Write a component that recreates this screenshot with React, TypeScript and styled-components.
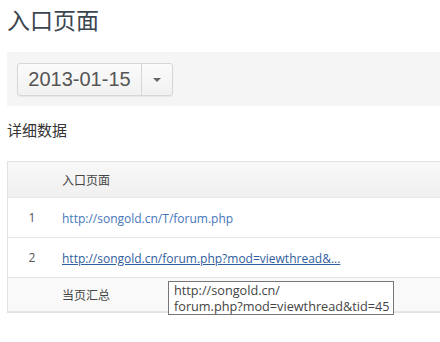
import React from "react";
import styled, { createGlobalStyle } from "styled-components";

const Global = createGlobalStyle`
  html, body { margin: 0; padding: 0; background: #fff; }
  body { font-family: "Liberation Sans", "Noto Sans CJK SC", sans-serif; color: #333; }
`;

const Page = styled.div`
  width: 440px;
  height: 342px;
  overflow: hidden;
  padding-left: 7px;
  box-sizing: border-box;
`;

const Title = styled.h1`
  margin: 0;
  padding-top: 3px;
  height: 49px;
  font-family: "Noto Sans CJK SC", sans-serif;
  font-weight: 400;
  font-size: 23px;
  line-height: 32px;
  color: #3b4650;
`;

const Band = styled.div`
  background: #f5f5f5;
  height: 54px;
  display: flex;
  align-items: center;
  padding-left: 10px;
`;

const SplitButton = styled.div`
  display: flex;
  height: 33px;
  border: 1px solid #d6d6d6;
  border-radius: 3px;
  background: linear-gradient(#fbfbfb, #f1f1f1);
  box-shadow: 0 1px 1px rgba(0,0,0,0.06);
  box-sizing: border-box;
`;

const DatePart = styled.div`
  width: 123px;
  display: flex;
  align-items: center;
  justify-content: center;
  font-family: "Liberation Sans", sans-serif;
  font-size: 20px;
  color: #555;
  border-right: 1px solid #d6d6d6;
`;

const CaretPart = styled.div`
  width: 30px;
  display: flex;
  align-items: center;
  justify-content: center;
`;

const Caret = styled.span`
  width: 0;
  height: 0;
  border-left: 4px solid transparent;
  border-right: 4px solid transparent;
  border-top: 4px solid #666;
  margin-top: 1px;
`;

const Section = styled.h2`
  margin: 0;
  padding-top: 14px;
  height: 41px;
  box-sizing: border-box;
  font-family: "Noto Sans CJK SC", sans-serif;
  font-weight: 400;
  font-size: 15px;
  line-height: 20px;
  color: #333;
  margin-bottom: 14px;
`;

const Table = styled.div`
  position: relative;
  border-left: 1px solid #e2e2e2;
  border-top: 1px solid #e2e2e2;
  border-bottom: 1px solid #e2e2e2;
`;

const Row = styled.div<{ $h: number; $bg?: string }>`
  display: grid;
  grid-template-columns: 48px 1fr;
  align-items: center;
  box-sizing: border-box;
  height: ${(p) => p.$h}px;
  background: ${(p) => p.$bg || "#fff"};
  border-bottom: 1px solid #e6e6e6;
  &:last-child { border-bottom: none; }
  font-size: 12px;
`;

const Num = styled.div`
  text-align: center;
  font-family: "Open Sans", sans-serif;
  font-size: 12px;
  color: #555;
`;

const Cell = styled.div`
  padding-left: 6px;
  font-family: "Noto Sans CJK SC", sans-serif;
  font-size: 12px;
  color: #444;
  white-space: nowrap;
`;

const Link = styled.a<{ $hover?: boolean }>`
  font-family: "Open Sans", "Noto Sans CJK SC", sans-serif;
  font-size: 12px;
  color: ${(p) => (p.$hover ? "#2f5e9e" : "#4477b9")};
  text-decoration: ${(p) => (p.$hover ? "underline" : "none")};
`;

const Tooltip = styled.div`
  position: absolute;
  left: 160px;
  top: 119px;
  width: 226px;
  height: 34px;
  box-sizing: border-box;
  border: 1px solid #767676;
  background: #fff;
  padding: 0 5px;
  font-family: "Open Sans", sans-serif;
  font-size: 12.7px;
  line-height: 16px;
  color: #444;
  white-space: nowrap;
`;

export default function App() {
  return (
    <>
      <Global />
      <Page>
        <Title>入口页面</Title>
        <Band>
          <SplitButton>
            <DatePart>2013-01-15</DatePart>
            <CaretPart>
              <Caret />
            </CaretPart>
          </SplitButton>
        </Band>
        <Section>详细数据</Section>
        <Table>
          <Row $h={36} $bg="linear-gradient(#f8f8f8, #f0f0f0)">
            <Num />
            <Cell>入口页面</Cell>
          </Row>
          <Row $h={40}>
            <Num>1</Num>
            <Cell>
              <Link href="#">http://songold.cn/T/forum.php</Link>
            </Cell>
          </Row>
          <Row $h={40}>
            <Num>2</Num>
            <Cell>
              <Link href="#" $hover>
                http://songold.cn/forum.php?mod=viewthread&amp;...
              </Link>
            </Cell>
          </Row>
          <Row $h={34} $bg="#f9f9f9">
            <Num />
            <Cell>当页汇总</Cell>
          </Row>
          <Tooltip>
            http://songold.cn/
            <br />
            forum.php?mod=viewthread&amp;tid=45
          </Tooltip>
        </Table>
      </Page>
    </>
  );
}
